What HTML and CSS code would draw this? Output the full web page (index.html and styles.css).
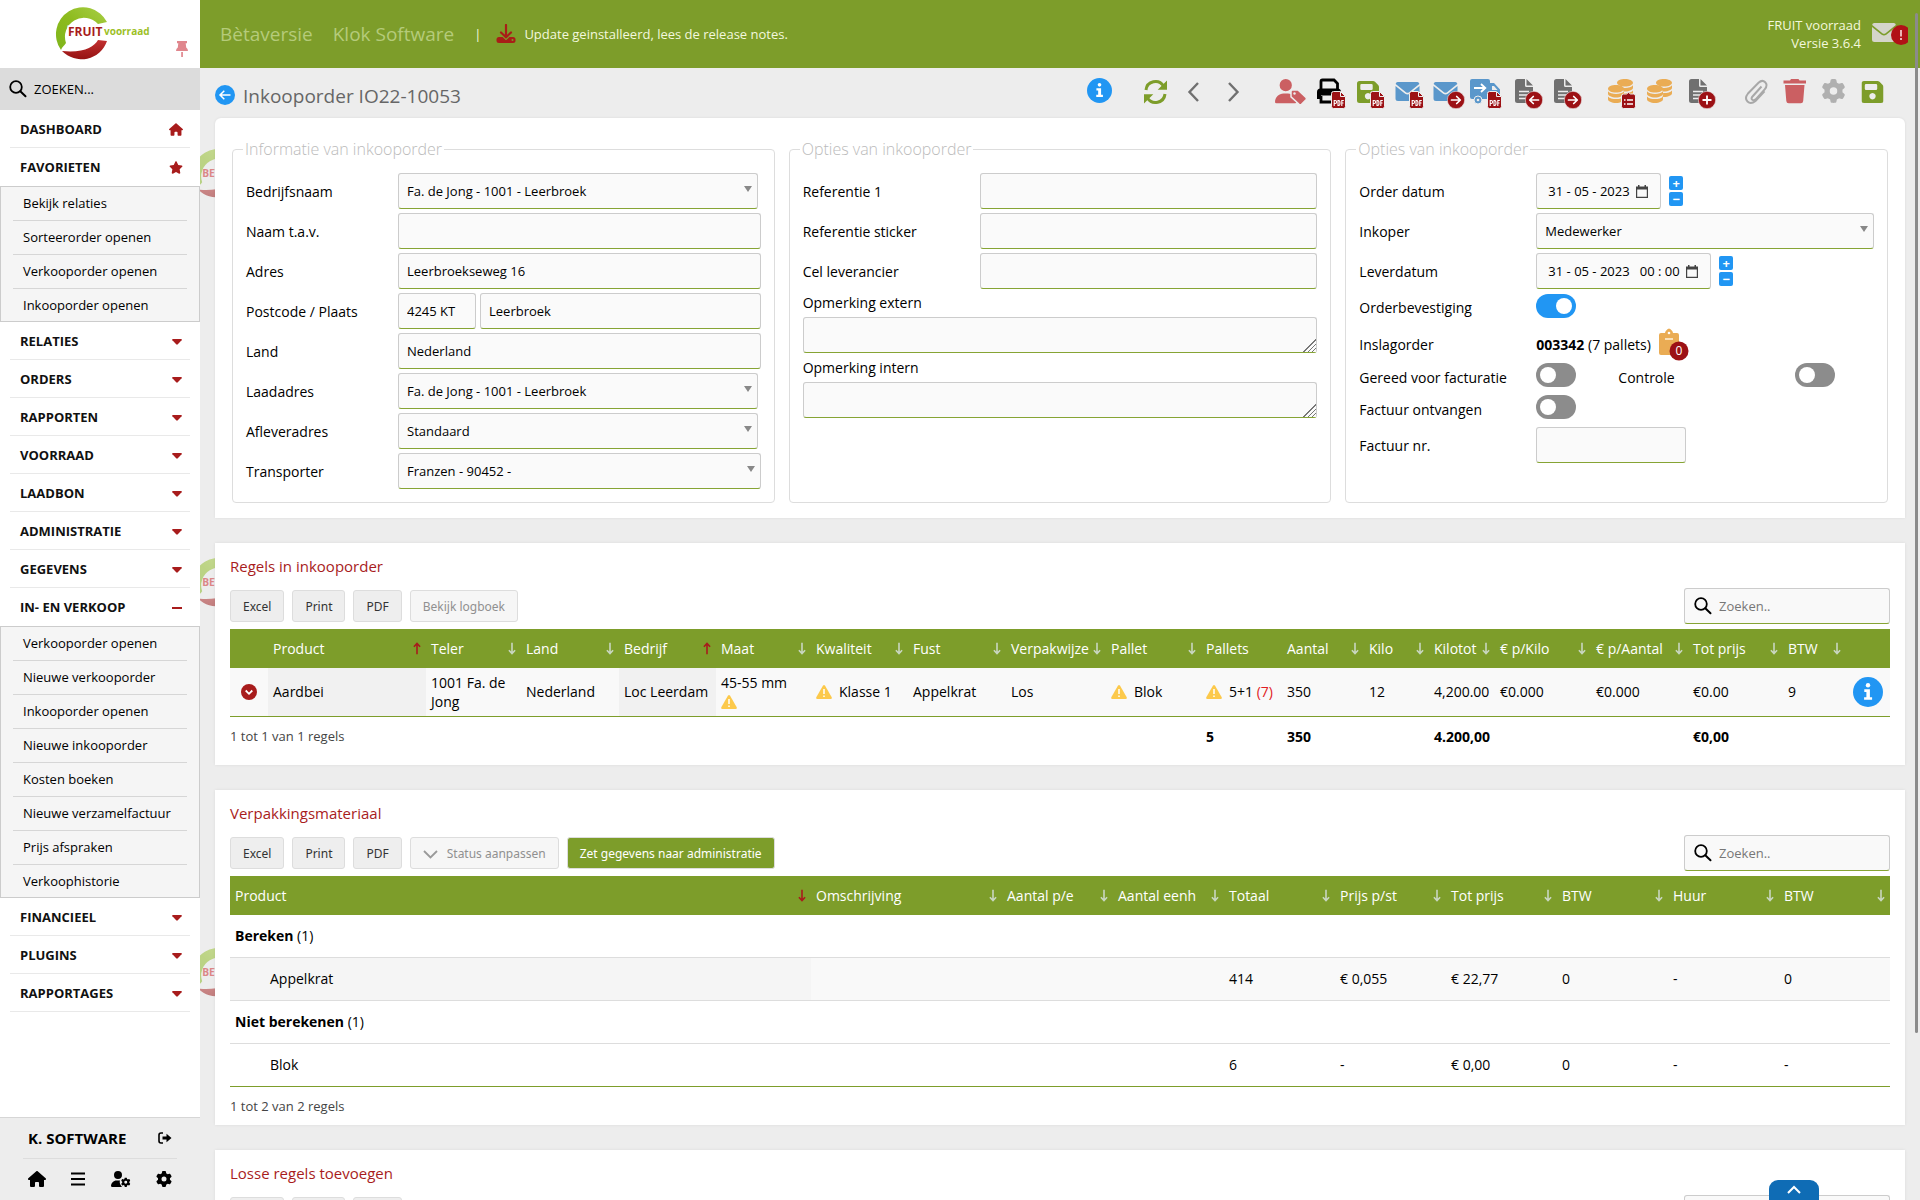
FILE: index.html
```html
<!DOCTYPE html>
<html lang="nl">
<head>
<meta charset="utf-8">
<title>Inkooporder IO22-10053</title>
<link rel="stylesheet" href="styles.css">
</head>
<body>
<svg class="defs" aria-hidden="true">
  <defs>
    <linearGradient id="g-green" x1="0" y1="1" x2="1" y2="0"><stop offset="0" stop-color="#7fb51c"/><stop offset=".5" stop-color="#8dbb1e"/><stop offset="1" stop-color="#a9cf46"/></linearGradient>
    <linearGradient id="g-red" x1="0" y1="0" x2="0" y2="1"><stop offset="0" stop-color="#c23030"/><stop offset="1" stop-color="#951212"/></linearGradient>
  </defs>
  <symbol id="ring" viewBox="0 0 56 56"><path fill="url(#g-green)" d="M53 18A27 27 0 1 0 7 46C8 43 10 42 12 39A19 19 0 0 1 44 20Z"/><path fill="url(#g-red)" d="M8 47A27 27 0 0 0 53 37L44 36C40 43 30 49 8 47Z"/></symbol>
  <symbol id="house" viewBox="0 0 576 512"><path d="M575.8 255.5c0 18-15 32.1-32 32.1h-32l.7 160.2V472c0 22.1-17.9 40-40 40H392c-22.1 0-40-17.9-40-40V384c0-17.7-14.3-32-32-32H256c-17.7 0-32 14.3-32 32v88c0 22.1-17.9 40-40 40H104c-22.1 0-40-17.9-40-40V287.6H32c-18 0-32-14-32-32.1c0-9 3-17 10-24L266.4 8c7-7 15-8 22-8s15 2 21 7L564.8 231.5c8 7 12 15 11 24z"/></symbol>
  <symbol id="star" viewBox="0 0 576 512"><path d="M316.9 18C311.6 7 300.4 0 288.1 0s-23.4 7-28.8 18L195 150.3 51.4 171.5c-12 1.8-22 10.2-25.7 21.7s-.7 24.2 7.9 32.7L137.8 329 113.2 474.7c-2 12 3 24.2 12.9 31.3s23 8 33.8 2.3l128.3-68.5 128.3 68.5c10.8 5.7 23.9 4.9 33.8-2.3s14.9-19.3 12.9-31.3L438.5 329 542.7 225.9c8.6-8.5 11.7-21.2 7.9-32.7s-13.7-19.9-25.7-21.7L381.2 150.3 316.9 18z"/></symbol>
  <symbol id="gear" viewBox="0 0 512 512"><path d="M495.9 166.6c3.2 8.7 .5 18.4-6.4 24.6l-43.3 39.4c1.1 8.3 1.7 16.8 1.7 25.4s-.6 17.1-1.7 25.4l43.3 39.4c6.9 6.2 9.6 15.9 6.4 24.6c-4.4 11.9-9.7 23.3-15.8 34.3l-4.7 8.1c-6.6 11-14 21.4-22.1 31.2c-5.9 7.2-15.7 9.6-24.5 6.8l-55.7-17.7c-13.4 10.3-28.2 18.9-44 25.4l-12.5 57.1c-2 9.1-9 16.3-18.2 17.8c-13.8 2.3-28 3.5-42.5 3.5s-28.7-1.2-42.5-3.5c-9.2-1.5-16.2-8.7-18.2-17.8l-12.5-57.1c-15.8-6.5-30.6-15.1-44-25.4L83.1 425.9c-8.8 2.8-18.6 .3-24.5-6.8c-8.1-9.8-15.5-20.2-22.1-31.2l-4.7-8.1c-6.1-11-11.4-22.4-15.8-34.3c-3.2-8.7-.5-18.4 6.4-24.6l43.3-39.4C64.6 273.1 64 264.6 64 256s.6-17.1 1.7-25.4L22.4 191.2c-6.9-6.2-9.6-15.9-6.4-24.6c4.4-11.9 9.7-23.3 15.8-34.3l4.7-8.1c6.6-11 14-21.4 22.1-31.2c5.9-7.2 15.7-9.6 24.5-6.8l55.7 17.7c13.4-10.3 28.2-18.9 44-25.4l12.5-57.1c2-9.1 9-16.3 18.2-17.8C227.3 1.2 241.5 0 256 0s28.7 1.2 42.5 3.5c9.2 1.5 16.2 8.7 18.2 17.8l12.5 57.1c15.8 6.5 30.6 15.1 44 25.4l55.7-17.7c8.8-2.8 18.6-.3 24.5 6.8c8.1 9.8 15.5 20.2 22.1 31.2l4.7 8.1c6.1 11 11.4 22.4 15.8 34.3zM256 336a80 80 0 1 0 0-160 80 80 0 1 0 0 160z"/></symbol>
  <symbol id="user" viewBox="0 0 448 512"><path d="M224 256A128 128 0 1 0 224 0a128 128 0 1 0 0 256zm-45.7 48C79.8 304 0 383.8 0 482.3C0 498.7 13.3 512 29.7 512H418.3c16.4 0 29.7-13.3 29.7-29.7C448 383.8 368.2 304 269.7 304H178.3z"/></symbol>
  <symbol id="search" viewBox="0 0 18 18"><circle cx="7" cy="7" r="5.8" fill="none" stroke="currentColor" stroke-width="1.8"/><path d="M11.3 11.3l5.2 5" fill="none" stroke="currentColor" stroke-width="2" stroke-linecap="round"/></symbol>
  <symbol id="caret" viewBox="0 0 10 6"><path d="M.8 0h8.4q1 .3.4 1.2L5.8 5.3q-.8.8-1.6 0L.4 1.2Q-.2.3.8 0z"/></symbol>
  <symbol id="down" viewBox="0 0 8 13"><path d="M4 .8v10.4M.9 8.2L4 11.6l3.1-3.4" fill="none" stroke="currentColor" stroke-width="1.6"/></symbol>
  <symbol id="up" viewBox="0 0 8 13"><path d="M4 12.2V1.8M.9 4.8L4 1.4l3.1 3.4" fill="none" stroke="currentColor" stroke-width="1.6"/></symbol>
  <symbol id="warn" viewBox="0 0 16 14"><path fill="#fcc94b" d="M6.9.8q1.1-1.4 2.2 0l6.6 11.4q.6 1.5-1 1.8H1.3q-1.6-.3-1-1.8z"/><path stroke="#fff" stroke-width="1.5" d="M8 4v5M8 10.5v1.5"/></symbol>
  <symbol id="info" viewBox="0 0 30 30"><circle cx="15" cy="15" r="15" fill="#2196f3"/><circle cx="15" cy="8.2" r="2.2" fill="#fff"/><path fill="#fff" d="M11.3 12.3h5.6v7.9h2.2v2.6h-8v-2.6h2.3v-5.3h-2.1z"/></symbol>
  <symbol id="cal" viewBox="0 0 12 13"><path fill="#444" d="M2 0h1.500v1.500h5V0H10v1.500h2V13H0V1.500h2zM1.200 4.500v7.300h9.600V4.500z" fill-rule="evenodd"/></symbol>
  <symbol id="floppy" viewBox="0 0 22 22"><path fill="#7d9d2a" fill-rule="evenodd" d="M2.500 0H16q1.200 0 2 .8L21.200 4q.8.8.8 2v13.500q0 2.500-2.500 2.500h-17Q0 22 0 19.500v-17Q0 0 2.500 0zM4.500 3q-1.200 0-1.200 1.200v3.600Q3.300 9 4.500 9h10q1.200 0 1.200-1.200V4.200Q15.700 3 14.500 3zM11 12a3.200 3.200 0 1 0 .01 0z"/></symbol>
  <symbol id="file" viewBox="0 0 18 24"><path fill="#707070" d="M2.500 0H10v6.500Q10 8 11.500 8H18v13.500q0 2.500-2.500 2.500h-13Q0 24 0 21.500v-19Q0 0 2.500 0zM11.500 0L18 6.500h-6.500z"/><path stroke="#ededed" stroke-width="1.500" d="M4 12.500h10M4 16h10M4 19.500h10"/></symbol>
  <symbol id="mail" viewBox="0 0 24 19"><path d="M2 0h20q2 .3 1.800 2L13.300 10.400q-1.300.9-2.600 0L.2 2Q0 .3 2 0zM0 4l9.700 7.800q2.300 1.600 4.600 0L24 4v12.500q0 2.500-2.500 2.500h-19Q0 19 0 16.500z"/></symbol>
  <symbol id="coin" viewBox="0 0 16 18"><path fill="#eaac54" d="M8 0c4.400 0 8 1.700 8 3.700S12.400 7.500 8 7.500 0 5.800 0 3.700 3.600 0 8 0zM0 6.200c1.500 1.800 4.500 2.700 8 2.700s6.500-.9 8-2.700v2.600c0 2-3.600 3.700-8 3.700S0 10.800 0 8.800zM0 11.400c1.500 1.800 4.500 2.700 8 2.700s6.500-.9 8-2.700v2.900C16 16.300 12.400 18 8 18s-8-1.700-8-3.700z"/></symbol>
  <symbol id="coins" viewBox="0 0 25 24"><use href="#coin" x="9" y="0" width="16" height="18"/><circle cx="8" cy="15" r="8.200" fill="#ededed"/><use href="#coin" x="0" y="6" width="16" height="18"/></symbol>
  <symbol id="pdf" viewBox="0 0 15 18"><path fill="#9c1115" stroke="#ededed" d="M2.500.5h7l5 5v10q0 2-2 2h-10q-2 0-2-2v-13q0-2 2-2z"/><path stroke="#ededed" fill="none" d="M9.500 1v4.500H14"/><path stroke="#fff" stroke-width="1.100" fill="none" d="M3.200 15V9.500h1q1.400 0 1.400 1.500t-1.400 1.500h-.8M7 9.500V14.500h.7q1.300 0 1.300-2.500T7.700 9.500zM10.800 15V9.500h2M10.800 12h1.700"/></symbol>
  <symbol id="b-right" viewBox="0 0 18 18"><circle cx="9" cy="9" r="8.700" fill="#9c1115" stroke="#ededed" stroke-width=".6"/><path stroke="#fff" stroke-width="1.700" fill="none" stroke-linecap="round" stroke-linejoin="round" d="M4.500 9h8.700M9.700 5.500L13.300 9l-3.600 3.500"/></symbol>
  <symbol id="b-left" viewBox="0 0 18 18"><circle cx="9" cy="9" r="8.700" fill="#9c1115" stroke="#ededed" stroke-width=".6"/><path stroke="#fff" stroke-width="1.700" fill="none" stroke-linecap="round" stroke-linejoin="round" d="M13.500 9H4.800M8.300 5.500L4.700 9l3.600 3.500"/></symbol>
  <symbol id="b-plus" viewBox="0 0 18 18"><circle cx="9" cy="9" r="8.700" fill="#9c1115" stroke="#ededed" stroke-width=".6"/><path stroke="#fff" stroke-width="1.800" d="M4.500 9h9M9 4.500v9"/></symbol>
</svg>

<aside class="sidebar">
  <div class="brand">
    <svg class="brand-logo" width="104" height="56" viewBox="0 0 104 56" role="img" aria-label="FRUIT voorraad">
      <use href="#ring" width="56" height="56"/>
      <text class="logo-fruit" x="14" y="32">FRUIT</text>
      <text class="logo-voorraad" x="50" y="31">voorraad</text>
    </svg>
    <svg class="pin" width="12" height="16" viewBox="0 0 12 16"><path fill="#e0868d" d="M1 0h10v2.200H9.700L10.200 6.500Q12 7.500 12 10H0q0-2.500 1.800-3.500L2.300 2.200H1zM5.200 11h1.700v5H5.200z"/></svg>
  </div>
  <label class="side-search"><svg width="18" height="18"><use href="#search"/></svg><input type="text" placeholder="ZOEKEN..." aria-label="Zoeken"></label>
  <nav class="menu">
    <a class="item" href="#">DASHBOARD<svg class="ico" width="14" height="13"><use href="#house"/></svg></a>
    <a class="item open" href="#">FAVORIETEN<svg class="ico" width="14" height="13"><use href="#star"/></svg></a>
    <div class="sub">
      <a href="#">Bekijk relaties</a><a href="#">Sorteerorder openen</a><a href="#">Verkooporder openen</a><a href="#">Inkooporder openen</a>
    </div>
    <a class="item" href="#">RELATIES<svg class="ico car" width="10" height="6"><use href="#caret"/></svg></a>
    <a class="item" href="#">ORDERS<svg class="ico car" width="10" height="6"><use href="#caret"/></svg></a>
    <a class="item" href="#">RAPPORTEN<svg class="ico car" width="10" height="6"><use href="#caret"/></svg></a>
    <a class="item" href="#">VOORRAAD<svg class="ico car" width="10" height="6"><use href="#caret"/></svg></a>
    <a class="item" href="#">LAADBON<svg class="ico car" width="10" height="6"><use href="#caret"/></svg></a>
    <a class="item" href="#">ADMINISTRATIE<svg class="ico car" width="10" height="6"><use href="#caret"/></svg></a>
    <a class="item" href="#">GEGEVENS<svg class="ico car" width="10" height="6"><use href="#caret"/></svg></a>
    <a class="item open" href="#">IN- EN VERKOOP<svg class="ico car" width="10" height="2"><path d="M0 0h10v2H0z"/></svg></a>
    <div class="sub">
      <a href="#">Verkooporder openen</a><a href="#">Nieuwe verkooporder</a><a href="#">Inkooporder openen</a><a href="#">Nieuwe inkooporder</a><a href="#">Kosten boeken</a><a href="#">Nieuwe verzamelfactuur</a><a href="#">Prijs afspraken</a><a href="#">Verkoophistorie</a>
    </div>
    <a class="item" href="#">FINANCIEEL<svg class="ico car" width="10" height="6"><use href="#caret"/></svg></a>
    <a class="item" href="#">PLUGINS<svg class="ico car" width="10" height="6"><use href="#caret"/></svg></a>
    <a class="item" href="#">RAPPORTAGES<svg class="ico car" width="10" height="6"><use href="#caret"/></svg></a>
  </nav>
  <div class="account">
    <div class="account-name"><span>K. SOFTWARE</span>
      <button type="button" aria-label="Uitloggen"><svg width="14" height="12" viewBox="0 0 14 12"><path d="M5 1H3Q1 1 1 3v6q0 2 2 2h2" fill="none" stroke="#000" stroke-width="1.600"/><path d="M4.500 4.600h4V1.800L13.500 6l-5 4.200V7.400h-4z"/></svg></button></div>
    <div class="account-links">
      <button type="button" aria-label="Start"><svg width="18" height="16"><use href="#house"/></svg></button>
      <button type="button" aria-label="Menu"><svg width="14" height="14" viewBox="0 0 14 14"><path d="M0 1.500h14M0 7h14M0 12.500h14" stroke="#000" stroke-width="1.800"/></svg></button>
      <button type="button" aria-label="Gebruiker"><svg width="20" height="16" viewBox="0 0 20 16"><use href="#user" width="14" height="16"/><circle cx="14.700" cy="11" r="6" fill="#ededed"/><use href="#gear" x="10" y="6.500" width="9.500" height="9.500"/></svg></button>
      <button type="button" aria-label="Instellingen"><svg width="16" height="16"><use href="#gear"/></svg></button>
    </div>
  </div>
</aside>

<div class="page">
  <header class="topbar">
    <span class="beta">Bètaversie</span><span class="beta">Klok Software</span>
    <span class="bar">|</span>
    <svg class="dl" width="20" height="20" viewBox="0 0 20 20"><rect x=".5" y="13" width="19" height="6" rx="2.500" fill="#a81e17"/><path d="M10 1v12M4.800 8.500L10 13.500l5.200-5" fill="none" stroke="#7d9d2a" stroke-width="4"/><path d="M10 1v12M5 8.500L10 13.200l5-4.700" fill="none" stroke="#a81e17" stroke-width="2.200" stroke-linecap="round"/><circle cx="16.500" cy="16" r="1" fill="#7d9d2a"/></svg>
    <a class="notes" href="#">Update geinstalleerd, lees de release notes.</a>
    <p class="version">FRUIT voorraad<br>Versie 3.6.4</p>
    <button type="button" class="inbox" aria-label="Berichten"><svg width="36" height="24" viewBox="0 0 36 24"><use href="#mail" y="1" width="24" height="19" fill="#d5d5cb"/><circle cx="29" cy="13" r="10" fill="#b11116"/><path d="M29 8v6.500M29 16v2" stroke="#f6d0d0" stroke-width="1.700"/></svg></button>
  </header>

  <main class="content">
    <svg class="mark mark-1" viewBox="0 0 56 56"><use href="#ring"/><text x="12" y="33">BETA</text></svg>
    <svg class="mark mark-2" viewBox="0 0 56 56"><use href="#ring"/><text x="12" y="33">BETA</text></svg>
    <svg class="mark mark-3" viewBox="0 0 56 56"><use href="#ring"/><text x="12" y="33">BETA</text></svg>

    <div class="heading">
      <button type="button" class="back" aria-label="Terug"><svg width="20" height="20" viewBox="0 0 20 20"><circle cx="10" cy="10" r="10" fill="#2196f3"/><path d="M15.500 10H5M9.300 5.700L5 10l4.300 4.300" fill="none" stroke="#fff" stroke-width="1.500"/></svg></button>
      <h1>Inkooporder IO22-10053</h1>
      <div class="tools">
        <div class="group"><button type="button" aria-label="Info"><svg viewBox="0 0 39 36"><use href="#info" x="8" y="2" width="25" height="25"/></svg></button></div>
        <div class="group">
          <button type="button" aria-label="Vernieuwen"><svg viewBox="0 0 39 36"><path d="M10 14a9.500 9.500 0 0 1 17.500-4M29 18a9.500 9.500 0 0 1-17.500 4" fill="none" stroke="#7d9d2a" stroke-width="3"/><path fill="#7d9d2a" d="M31 4.500v9.300h-9.300zM8 27.500v-9.300h9.300z"/></svg></button>
          <button type="button" aria-label="Vorige"><svg viewBox="0 0 39 36"><path d="M23 7l-8.500 9L23 25" fill="none" stroke="#707070" stroke-width="2.400"/></svg></button>
          <button type="button" aria-label="Volgende"><svg viewBox="0 0 39 36"><path d="M15 7l8.500 9L15 25" fill="none" stroke="#707070" stroke-width="2.400"/></svg></button>
        </div>
        <div class="group">
          <button type="button" aria-label="Relatie"><svg viewBox="0 0 39 36"><g fill="#cb5f62"><use href="#user" x="4" y="3" width="21.500" height="24.500"/><path stroke="#ededed" stroke-width="1.500" d="M20 15.500q0-1.500 1.500-1.500h5.500l8 7.500q1 1.200 0 2.300l-4.500 4.500q-1.200 1-2.400 0L20 20.800z"/></g><circle cx="23.500" cy="17.500" r="1.200" fill="#ededed"/></svg></button>
          <button type="button" aria-label="Print PDF"><svg viewBox="0 0 39 36"><path d="M11 13V5.500q0-1.500 1.500-1.500H24l3.500 3.500V13M11 20v6h17v-6" fill="none" stroke="#000" stroke-width="2.800"/><path d="M10.500 12.500h17q3.500 0 3.500 3.500v7h-4v-3.500H11V23H7v-7q0-3.500 3.500-3.500z"/><use href="#pdf" x="20.500" y="15" width="16" height="18"/></svg></button>
          <button type="button" aria-label="Opslaan als PDF"><svg viewBox="0 0 39 36"><use href="#floppy" x="8" y="5" width="22" height="22"/><use href="#pdf" x="20.500" y="15" width="16" height="18"/></svg></button>
          <button type="button" aria-label="Mail PDF"><svg viewBox="0 0 39 36"><use href="#mail" x="7" y="6" width="25" height="19" fill="#5a97cb"/><use href="#pdf" x="20.500" y="15" width="16" height="18"/></svg></button>
          <button type="button" aria-label="Mail versturen"><svg viewBox="0 0 39 36"><use href="#mail" x="6" y="6" width="25" height="19" fill="#5a97cb"/><use href="#b-right" x="20" y="15" width="18" height="18"/></svg></button>
          <button type="button" aria-label="Transport PDF"><svg viewBox="0 0 39 36"><path fill="#5a97cb" d="M6 3h16q2 0 2 2v2h4l6 6.500V23H6q-2 0-2-2V5q0-2 2-2z"/><circle cx="12" cy="24" r="4" fill="#5a97cb" stroke="#ededed"/><circle cx="12" cy="24" r="1.300" fill="#ededed"/><path d="M26 10h2l3.500 4H26z" fill="#ededed"/><path d="M8 12h11M15 8l4.300 4-4.300 4" fill="none" stroke="#fff" stroke-width="1.800"/><use href="#pdf" x="20.500" y="15" width="16" height="18"/></svg></button>
          <button type="button" aria-label="Importeren"><svg viewBox="0 0 39 36"><use href="#file" x="10" y="3" width="18" height="24"/><use href="#b-left" x="20" y="15" width="18" height="18"/></svg></button>
          <button type="button" aria-label="Exporteren"><svg viewBox="0 0 39 36"><use href="#file" x="10" y="3" width="18" height="24"/><use href="#b-right" x="20" y="15" width="18" height="18"/></svg></button>
        </div>
        <div class="group">
          <button type="button" aria-label="Kosten"><svg viewBox="0 0 39 36"><use href="#coins" x="7" y="3" width="25" height="24"/><path fill="#9c1115" stroke="#ededed" d="M22.500 18h3q2-3 4 0h3q2 0 2 2v10.500q0 2-2 2h-10q-2 0-2-2V20q0-2 2-2z"/><path stroke="#fff" stroke-width="1.300" d="M23 24h1.500M26 24h6M23 28h1.500M26 28h6"/></svg></button>
          <button type="button" aria-label="Prijzen"><svg viewBox="0 0 39 36"><use href="#coins" x="7" y="3" width="25" height="24"/></svg></button>
          <button type="button" aria-label="Nieuw document"><svg viewBox="0 0 39 36"><use href="#file" x="10" y="3" width="18" height="24"/><use href="#b-plus" x="19" y="15" width="18" height="18"/></svg></button>
        </div>
        <div class="group">
          <button type="button" aria-label="Bijlagen"><svg viewBox="0 0 39 36"><path d="M25.500 10.500l-9 10q-1.800 2-.2 3.300t3.400-.5l9-10q3.500-4 .5-7t-6.700.5L12 17.500q-3.800 4.800-.5 8t8-.5l9-9.700" fill="none" stroke="#a8a8a8" stroke-width="2"/></svg></button>
          <button type="button" aria-label="Verwijderen"><svg viewBox="0 0 39 36"><path fill="#cb5f62" d="M16 3h7.500l1 1.500H31v3H8.500v-3H15zM10 9h19.500l-1.300 16q-.2 2.200-2.400 2.200H13.700q-2.200 0-2.400-2.200z"/></svg></button>
          <button type="button" aria-label="Instellingen"><svg viewBox="0 0 39 36"><use href="#gear" x="7.500" y="3" width="24" height="24" fill="#b0b0b0"/></svg></button>
          <button type="button" aria-label="Opslaan"><svg viewBox="0 0 39 36"><use href="#floppy" x="8.500" y="5" width="22" height="22"/></svg></button>
        </div>
      </div>
    </div>

    <section class="card order">
      <fieldset>
        <legend>Informatie van inkooporder</legend>
        <div class="form form-a">
          <label for="f1">Bedrijfsnaam</label><div class="select short"><select id="f1"><option>Fa. de Jong - 1001 - Leerbroek</option></select></div>
          <label for="f2">Naam t.a.v.</label><input id="f2" type="text">
          <label for="f3">Adres</label><input id="f3" type="text" value="Leerbroekseweg 16">
          <label for="f4">Postcode / Plaats</label><div class="pair"><input id="f4" class="zip" type="text" value="4245 KT"><input type="text" aria-label="Plaats" value="Leerbroek"></div>
          <label for="f5">Land</label><input id="f5" type="text" value="Nederland">
          <label for="f6">Laadadres</label><div class="select short"><select id="f6"><option>Fa. de Jong - 1001 - Leerbroek</option></select></div>
          <label for="f7">Afleveradres</label><div class="select short"><select id="f7"><option>Standaard</option></select></div>
          <label for="f8">Transporter</label><div class="select"><select id="f8"><option>Franzen - 90452 -</option></select></div>
        </div>
      </fieldset>
      <fieldset>
        <legend>Opties van inkooporder</legend>
        <div class="form form-b">
          <label for="r1">Referentie 1</label><input id="r1" type="text">
          <label for="r2">Referentie sticker</label><input id="r2" type="text">
          <label for="r3">Cel leverancier</label><input id="r3" type="text">
          <div class="area"><label for="o1">Opmerking extern</label><textarea id="o1"></textarea></div>
          <div class="area"><label for="o2">Opmerking intern</label><textarea id="o2"></textarea></div>
        </div>
      </fieldset>
      <fieldset>
        <legend>Opties van inkooporder</legend>
        <div class="form form-b form-c">
          <label class="up" for="d1">Order datum</label>
          <div class="date"><span class="datebox"><input id="d1" type="text" value="31 - 05 - 2023"><svg width="12" height="13"><use href="#cal"/></svg></span><span class="step"><button type="button">+</button><button type="button">−</button></span></div>
          <label class="up" for="d2">Inkoper</label><div class="select"><select id="d2"><option>Medewerker</option></select></div>
          <label class="up" for="d3">Leverdatum</label>
          <div class="date"><span class="datebox long"><input id="d3" type="text" value="31 - 05 - 2023   00 : 00"><svg width="12" height="13"><use href="#cal"/></svg></span><span class="step"><button type="button">+</button><button type="button">−</button></span></div>
          <label class="up" for="t1">Orderbevestiging</label><input id="t1" class="toggle first" type="checkbox" checked>
          <span>Inslagorder</span>
          <div class="inslag"><b>003342</b>&nbsp;(7 pallets)<svg width="30" height="34" viewBox="0 0 30 34"><path fill="#eaac54" d="M2 5h4q.5-3 4-4.500Q13.500 2 14 5h4q2 0 2 2v18q0 2-2 2H2q-2 0-2-2V7q0-2 2-2z"/><path d="M6 11h8" stroke="#fff3dd" stroke-width="1.500"/><circle cx="10" cy="5" r="1.300" fill="#fff"/><circle cx="20" cy="23" r="9.500" fill="#9c1115"/><text class="badge-n" x="20" y="27">0</text></svg></div>
          <label class="up" for="t2">Gereed voor facturatie</label>
          <div class="duo"><input id="t2" class="toggle" type="checkbox"><label class="up" for="t3">Controle</label><input id="t3" class="toggle" type="checkbox"></div>
          <label class="up" for="t4">Factuur ontvangen</label><input id="t4" class="toggle" type="checkbox">
          <label for="d4">Factuur nr.</label><input id="d4" class="nr" type="text">
        </div>
      </fieldset>
    </section>

    <section class="card">
      <h2>Regels in inkooporder</h2>
      <div class="bar-row">
        <button class="btn" type="button">Excel</button><button class="btn" type="button">Print</button><button class="btn" type="button">PDF</button><button class="btn" type="button" disabled>Bekijk logboek</button>
        <label class="search"><svg width="18" height="18"><use href="#search"/></svg><input type="text" placeholder="Zoeken.." aria-label="Zoeken in regels"></label>
      </div>
      <table>
        <colgroup><col class="w38"><col class="w158"><col class="w95"><col class="w98"><col class="w97"><col class="w95"><col class="w97"><col class="w98"><col class="w100"><col class="w95"><col class="w81"><col class="w82"><col class="w65"><col class="w66"><col class="w96"><col class="w97"><col class="w95"><col class="w63"><col class="w44"></colgroup>
        <thead><tr>
          <th></th>
          <th><button class="sort on">Product<svg><use href="#up"/></svg></button></th>
          <th><button class="sort">Teler<svg><use href="#down"/></svg></button></th>
          <th><button class="sort">Land<svg><use href="#down"/></svg></button></th>
          <th><button class="sort on">Bedrijf<svg><use href="#up"/></svg></button></th>
          <th><button class="sort">Maat<svg><use href="#down"/></svg></button></th>
          <th><button class="sort">Kwaliteit<svg><use href="#down"/></svg></button></th>
          <th><button class="sort">Fust<svg><use href="#down"/></svg></button></th>
          <th><button class="sort">Verpakwijze<svg><use href="#down"/></svg></button></th>
          <th><button class="sort">Pallet<svg><use href="#down"/></svg></button></th>
          <th>Pallets</th>
          <th><button class="sort">Aantal<svg><use href="#down"/></svg></button></th>
          <th><button class="sort">Kilo<svg><use href="#down"/></svg></button></th>
          <th><button class="sort">Kilotot<svg><use href="#down"/></svg></button></th>
          <th><button class="sort">€ p/Kilo<svg><use href="#down"/></svg></button></th>
          <th><button class="sort">€ p/Aantal<svg><use href="#down"/></svg></button></th>
          <th><button class="sort">Tot prijs<svg><use href="#down"/></svg></button></th>
          <th><button class="sort">BTW<svg><use href="#down"/></svg></button></th>
          <th></th>
        </tr></thead>
        <tbody><tr class="line">
          <td class="mid"><svg width="16" height="16" viewBox="0 0 16 16"><circle cx="8" cy="8" r="8" fill="#a81c1c"/><path d="M4.700 6.500L8 9.800l3.300-3.300" fill="none" stroke="#fff" stroke-width="1.800"/></svg></td>
          <td class="shade">Aardbei</td><td>1001 Fa. de Jong</td><td>Nederland</td><td class="shade">Loc Leerdam</td>
          <td>45-55 mm <svg class="warn"><use href="#warn"/></svg></td>
          <td><svg class="warn"><use href="#warn"/></svg>Klasse 1</td><td>Appelkrat</td><td>Los</td>
          <td><svg class="warn"><use href="#warn"/></svg>Blok</td>
          <td class="nowrap"><svg class="warn"><use href="#warn"/></svg>5+1 <span class="red">(7)</span></td>
          <td>350</td><td>12</td><td>4,200.00</td><td>€0.000</td><td>€0.000</td><td>€0.00</td><td>9</td>
          <td class="mid"><svg width="30" height="30"><use href="#info"/></svg></td>
        </tr></tbody>
        <tfoot><tr>
          <td class="count" colspan="10">1 tot 1 van 1 regels</td><td>5</td><td>350</td><td></td><td>4.200,00</td><td></td><td></td><td>€0,00</td><td></td><td></td>
        </tr></tfoot>
      </table>
    </section>

    <section class="card packing">
      <h2>Verpakkingsmateriaal</h2>
      <div class="bar-row">
        <button class="btn" type="button">Excel</button><button class="btn" type="button">Print</button><button class="btn" type="button">PDF</button><button class="btn" type="button" disabled><svg width="15" height="9" viewBox="0 0 15 9"><path d="M1 1l6.500 6.500L14 1" fill="none" stroke="#999" stroke-width="1.800"/></svg>Status aanpassen</button><button class="btn green" type="button">Zet gegevens naar administratie</button>
        <label class="search"><svg width="18" height="18"><use href="#search"/></svg><input type="text" placeholder="Zoeken.." aria-label="Zoeken in verpakkingsmateriaal"></label>
      </div>
      <table>
        <colgroup><col class="w581"><col class="w191"><col class="w111" span="8"></colgroup>
        <thead><tr>
          <th><button class="sort on">Product<svg><use href="#down"/></svg></button></th>
          <th><button class="sort">Omschrijving<svg><use href="#down"/></svg></button></th>
          <th><button class="sort">Aantal p/e<svg><use href="#down"/></svg></button></th>
          <th><button class="sort">Aantal eenh<svg><use href="#down"/></svg></button></th>
          <th><button class="sort">Totaal<svg><use href="#down"/></svg></button></th>
          <th><button class="sort">Prijs p/st<svg><use href="#down"/></svg></button></th>
          <th><button class="sort">Tot prijs<svg><use href="#down"/></svg></button></th>
          <th><button class="sort">BTW<svg><use href="#down"/></svg></button></th>
          <th><button class="sort">Huur<svg><use href="#down"/></svg></button></th>
          <th><button class="sort">BTW<svg><use href="#down"/></svg></button></th>
        </tr></thead>
        <tbody>
          <tr class="group-row"><td colspan="10"><b>Bereken</b> (1)</td></tr>
          <tr class="odd"><td class="indent">Appelkrat</td><td></td><td></td><td></td><td>414</td><td>€ 0,055</td><td>€ 22,77</td><td>0</td><td>-</td><td>0</td></tr>
          <tr class="group-row"><td colspan="10"><b>Niet berekenen</b> (1)</td></tr>
          <tr class="last"><td class="indent">Blok</td><td></td><td></td><td></td><td>6</td><td>-</td><td>€ 0,00</td><td>0</td><td>-</td><td>-</td></tr>
        </tbody>
      </table>
      <p class="count">1 tot 2 van 2 regels</p>
    </section>

    <section class="card">
      <h2>Losse regels toevoegen</h2>
      <div class="bar-row">
        <button class="btn" type="button">Excel</button><button class="btn" type="button">Print</button><button class="btn" type="button">PDF</button>
        <label class="search"><svg width="18" height="18"><use href="#search"/></svg><input type="text" placeholder="Zoeken.." aria-label="Zoeken in losse regels"></label>
      </div>
    </section>
  </main>
</div>
<button class="to-top" type="button" aria-label="Naar boven"><svg width="14" height="9" viewBox="0 0 14 9"><path d="M1 8l6-6 6 6" fill="none" stroke="#fff" stroke-width="2"/></svg></button>
<div class="scroll-thumb"></div>
</body>
</html>
```

FILE: styles.css
```css
* { box-sizing: border-box; }
body {
  margin: 0;
  height: 100vh;
  overflow: hidden;
  display: grid;
  grid-template-columns: 200px minmax(0, 1fr);
  background: #ededed;
  color: #000;
  font: 14px/19px "Open Sans", sans-serif;
}
.defs { position: absolute; width: 0; height: 0; }
button, input, select, textarea { font: inherit; color: inherit; }
button { padding: 0; border: 0; background: none; }
svg { display: block; flex: none; }
a { color: inherit; text-decoration: none; }

/* Sidebar */
.sidebar {
  display: flex;
  flex-direction: column;
  height: 100vh;
  background: #fff;
  position: relative;
  z-index: 1;
}
.brand {
  height: 68px;
  display: flex;
  justify-content: space-between;
  padding: 4px 12px 0 54px;
}
.brand-logo { overflow: visible; }
.pin { margin-top: 37px; }
.logo-fruit { font: bold 12px "Open Sans", sans-serif; fill: #a81c1c; stroke: #fff; stroke-width: 3px; paint-order: stroke; }
.logo-voorraad { font: bold 10px "Open Sans", sans-serif; fill: #9cc026; }
.side-search {
  height: 42px;
  flex: none;
  display: flex;
  align-items: center;
  gap: 6px;
  padding-left: 9px;
  background: #dcdcdc;
}
.side-search input { width: 150px; border: 0; background: none; font-size: 13px; padding: 0; margin-left: 1px; }
.side-search input::placeholder { color: #000; }
.item {
  height: 38px;
  margin: 0 10px;
  padding: 2px 7px 0 10px;
  display: flex;
  align-items: center;
  justify-content: space-between;
  border-bottom: 1px solid #e9e9e9;
  font-size: 13px;
  font-weight: 700;
  color: #111;
}
.item.open { border-bottom-color: transparent; }
.ico { fill: #a81c1c; }
.car { margin-right: 1px; }
.sub { background: #f5f5f5; border: 1px solid #ccc; padding: 0 12px; font-size: 13px; }
.sub a {
  display: flex;
  align-items: center;
  height: 34px;
  padding-left: 10px;
  border-bottom: 1px solid #d6d6d6;
}
.sub a:last-child { height: 32px; border-bottom: 0; }
.account {
  margin-top: auto;
  height: 83px;
  background: #ededed;
  border-top: 1px solid #d6d6d6;
  padding: 0 23px;
}
.account-name {
  height: 41px;
  display: flex;
  align-items: center;
  justify-content: space-between;
  padding: 0 5px;
  border-bottom: 1px solid #ddd;
  font-size: 15px;
  font-weight: 700;
}
.account-links {
  height: 40px;
  display: flex;
  align-items: center;
  justify-content: space-between;
  padding: 0 5px;
}

/* Top bar */
.page { min-width: 0; height: 100vh; overflow: hidden; }
.topbar {
  height: 68px;
  display: flex;
  align-items: center;
  padding: 0 12px 0 20px;
  background: #7d9d2a;
  color: #f3f8dd;
  font-size: 13px;
}
.beta { font-size: 19px; color: #b5cb7a; margin-right: 20px; }
.bar { margin-right: 15px; }
.dl { margin-right: 8px; }
.version { margin: 0 11px 0 auto; line-height: 18px; text-align: right; }

/* Content */
.content { position: relative; padding: 0 15px; display: flex; flex-direction: column; }
.mark { position: absolute; left: -9px; width: 52px; height: 52px; opacity: .5; }
.mark text { font: bold 11px "Open Sans", sans-serif; fill: #c22; }
.mark-1 { top: 78px; }
.mark-2 { top: 487px; }
.mark-3 { top: 877px; }
.heading { height: 50px; display: flex; align-items: center; }
.back { margin-top: 4px; }
h1 { margin: 5px auto 0 8px; font-size: 19px; line-height: 26px; font-weight: 400; color: #666; }
.tools { display: flex; gap: 18px; align-self: stretch; padding: 8px 13px 0 0; }
.group { display: flex; }
.group button { width: 39px; height: 36px; }
.group svg { width: 39px; height: 36px; }
.card {
  position: relative;
  background: #fff;
  margin-bottom: 25px;
  padding: 12px 15px 9px;
  box-shadow: 0 0 3px rgba(0, 0, 0, .08);
}
.order {
  display: grid;
  grid-template-columns: repeat(3, minmax(0, 1fr));
  gap: 14px;
  padding: 20px 17px 15px;
  border-radius: 6px 6px 0 0;
}
fieldset { margin: 0; min-width: 0; padding: 13px 10px; border: 1px solid #ddd; border-radius: 4px; }
legend { padding: 0 2px; font-size: 16px; line-height: 22px; font-weight: 300; color: #bbb; }
.form { display: grid; align-items: center; row-gap: 4px; padding: 0 3px; }
.form-a { grid-template-columns: 152px minmax(0, 1fr); }
.form-b { grid-template-columns: 177px minmax(0, 1fr); }
.form-c { row-gap: 0; }
.form input[type=text], select, textarea, .datebox {
  display: block;
  width: 100%;
  height: 36px;
  padding: 0 8px;
  border: 1px solid #ccc;
  border-bottom-color: #86a434;
  border-radius: 3px;
  background: #fafafa;
  font-size: 13px;
}
select { appearance: none; }
textarea { resize: vertical; }
textarea::-webkit-resizer {
  background:
    linear-gradient(135deg, #fafafa 50%, transparent 50%),
    repeating-linear-gradient(135deg, #777 0 1px, #fafafa 1px 3px);
}
.select { position: relative; }
.select::after {
  content: "";
  position: absolute;
  top: 13px;
  right: 6px;
  border: 4px solid transparent;
  border-top: 6px solid #888;
  border-bottom: 0;
}
.short { margin-right: 3px; }
.pair { display: flex; gap: 4px; }
.form .pair .zip { width: 78px; flex: none; }
.area { grid-column: 1 / -1; }
.area label { display: block; line-height: 20px; margin-bottom: 4px; }
.area + .area { margin-top: 1px; }
.date { display: flex; align-items: center; }
.form-c > .date, .form-c > .select, .up { margin-bottom: 4px; }
.form .datebox { width: 125px; display: flex; align-items: center; padding: 0 12px 0 11px; }
.form .datebox.long { width: 175px; }
.form .datebox input { width: auto; min-width: 0; flex: 1; height: 32px; padding: 0; border: 0; background: none; white-space: pre; }
.step { display: grid; gap: 2px; margin-left: 8px; }
.step button {
  width: 14px;
  height: 14px;
  border-radius: 2px;
  background: #2196f3;
  color: #fff;
  font-size: 13px;
  line-height: 12px;
  font-weight: 700;
}
.toggle {
  appearance: none;
  width: 40px;
  height: 24px;
  margin: 0 0 8px;
  padding: 4px;
  border-radius: 12px;
  background: #8c8c8c;
}
.toggle::before { content: ""; display: block; width: 16px; height: 16px; border-radius: 50%; background: #fff; }
.toggle:checked { background: #2196f3; }
.toggle:checked::before { margin-left: 16px; }
.toggle.first { margin-top: 1px; }
.inslag { height: 37px; display: flex; align-items: center; }
.inslag svg { margin-left: 8px; }
.badge-n { font: 12px "Open Sans", sans-serif; fill: #fff; text-anchor: middle; }
.duo { display: flex; align-items: center; }
.duo label { width: 177px; margin-left: 42px; }
.form input.nr { width: 150px; }

/* Tables */
h2 { margin: 0 0 11px; font-size: 15px; line-height: 22px; font-weight: 400; color: #a81c1c; }
.bar-row { height: 36px; margin-bottom: 5px; display: flex; align-items: center; gap: 8px; }
.btn {
  height: 32px;
  padding: 2px 12px 0;
  display: flex;
  align-items: center;
  gap: 9px;
  border: 1px solid #ddd;
  border-radius: 3px;
  background: #eee;
  color: #333;
  font: 12px/16px "Noto Sans", sans-serif;
}
.btn:disabled { background: #f6f6f6; color: #909090; }
.btn.green { background: #7d9d2a; color: #fff; }
.search {
  margin-left: auto;
  width: 206px;
  height: 36px;
  display: flex;
  align-items: center;
  gap: 7px;
  padding: 0 9px;
  border: 1px solid #ccc;
  border-bottom: 1px solid #86a434;
  border-radius: 3px;
  background: #f9f9f9;
}
.search input { min-width: 0; width: 100%; padding: 0; border: 0; background: none; font-size: 13px; }
.search input::placeholder { color: #777; }
table { width: 100%; table-layout: fixed; border-collapse: collapse; }
th { height: 39px; padding: 0 5px; background: #7d9d2a; color: #fff; font-weight: 400; text-align: left; }
td { padding: 0 5px; }
.sort { width: 100%; display: flex; align-items: center; justify-content: space-between; white-space: nowrap; }
.sort svg { width: 8px; height: 13px; color: #c9d6c0; }
.sort.on svg { color: #a81c1c; }
.line td { height: 48px; background: #f9f9f9; border-bottom: 1px solid #7d9d2a; }
.line .shade { background: #f1f1f1; }
td.mid { padding: 0; }
.mid svg { margin: 0 auto; }
.warn { display: inline-block; width: 16px; height: 14px; margin-right: 7px; vertical-align: -2px; }
.nowrap { white-space: nowrap; }
.red { color: #e01b24; }
tfoot td { height: 40px; font-weight: 700; }
.count, tfoot td.count { margin: 0; padding: 0; font-size: 13px; font-weight: 400; color: #444; }
.packing { padding-bottom: 0; }
.packing td { height: 43px; border-bottom: 1px solid #ddd; }
.packing tr:first-child td { height: 42px; }
.packing .odd td { background: #f9f9f9; }
.packing .odd td.indent { background: #f5f5f5; }
.packing td.indent { padding-left: 40px; }
.packing .last td { border-bottom-color: #7d9d2a; }
.packing .count { line-height: 38px; }
.w38 { width: 38px; } .w44 { width: 44px; } .w63 { width: 63px; } .w65 { width: 65px; }
.w66 { width: 66px; } .w81 { width: 81px; } .w82 { width: 82px; } .w95 { width: 95px; }
.w96 { width: 96px; } .w97 { width: 97px; } .w98 { width: 98px; } .w100 { width: 100px; }
.w111 { width: 111px; } .w158 { width: 158px; } .w191 { width: 191px; } .w581 { width: 581px; }

.to-top {
  position: fixed;
  right: 101px;
  bottom: 0;
  z-index: 2;
  width: 50px;
  height: 20px;
  padding-top: 5px;
  display: flex;
  justify-content: center;
  border-radius: 9px 9px 0 0;
  background: #0f6cb5;
}
.scroll-thumb { position: fixed; right: 2px; top: 13px; width: 3px; height: 1020px; border-radius: 2px; background: #8b8b8b; }
```
